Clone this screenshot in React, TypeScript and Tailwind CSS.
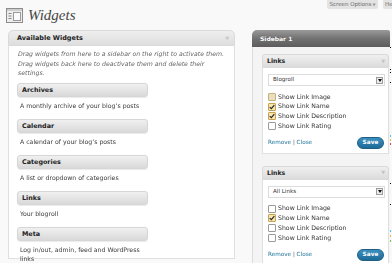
import React from "react";

const sans = "font-['DejaVu_Sans',sans-serif]";

function WidgetItem({ title, desc }: { title: string; desc: React.ReactNode }) {
  return (
    <div className="ml-[8px] w-[131px]">
      <div className="h-[14px] rounded-[3px] border border-[#d6d6d6] bg-gradient-to-b from-[#f0f0f0] to-[#d9d9d9] shadow-[0_1px_1px_rgba(0,0,0,0.08)] flex items-center pl-[4px]">
        <span className="text-[6.4px] font-bold text-[#222] leading-none">{title}</span>
      </div>
      <div className="pt-[3.5px] pl-[3px] mb-[9.5px] text-[6.2px] leading-[9px] text-[#3a3a3a] whitespace-nowrap will-change-transform">{desc}</div>
    </div>
  );
}

function Checkbox({ state }: { state: "on" | "off" | "hover" }) {
  if (state === "on") {
    return (
      <span className="w-[8px] h-[8px] rounded-[1px] border border-[#c9a24a] bg-[#f5e6b8] flex items-center justify-center">
        <svg width="7" height="6" viewBox="0 0 7 6">
          <path d="M0.8 3.2 L2.7 5 L6.2 0.8" fill="none" stroke="#222" strokeWidth="1.3" />
        </svg>
      </span>
    );
  }
  if (state === "hover") {
    return <span className="w-[8px] h-[8px] rounded-[1px] border border-[#c4b37c] bg-[#e9dfbd]" />;
  }
  return <span className="w-[8px] h-[8px] rounded-[1px] border border-[#9a9a9a] bg-white" />;
}

function LinksWidget({ select, checks }: { select: string; checks: ("on" | "off" | "hover")[] }) {
  const labels = ["Show Link Image", "Show Link Name", "Show Link Description", "Show Link Rating"];
  return (
    <div className="mb-[12px]">
      <div className="h-[14px] rounded-t-[3px] border border-[#d9d9d9] bg-gradient-to-b from-[#efefef] to-[#dcdcdc] flex items-center justify-between pl-[4px] pr-[3px]">
        <span className="text-[6.2px] font-bold text-[#222] leading-none">Links</span>
        <span className="text-[5px] text-[#c4c4c4] leading-none">▼</span>
      </div>
      <div className="bg-white border-x border-b border-[#dfdfdf] pl-[5px] pr-[3px] pt-[6px] pb-[4px]">
        <div className="h-[12px] border border-[#dcdcdc] bg-white flex items-center justify-between pl-[4px] pr-[1px]">
          <span className="text-[5.6px] text-[#333] leading-none">{select}</span>
          <span className="w-[7px] h-[7px] border border-[#9c9c9c] bg-[#ececec] flex items-center justify-center">
            <svg width="4" height="3" viewBox="0 0 4 3">
              <path d="M0 0 L4 0 L2 3 Z" fill="#111" />
            </svg>
          </span>
        </div>
        <div className="mt-[6px] flex flex-col">
          {labels.map((l, i) => (
            <div key={l} className="h-[9.7px] flex items-center gap-[1.5px]">
              <Checkbox state={checks[i]} />
              <span className="text-[6.2px] text-[#333] leading-none will-change-transform">{l}</span>
            </div>
          ))}
        </div>
        <div className="mt-[6px] h-[12px] flex items-center justify-between pr-[1px]">
          <span className="text-[5.7px] leading-none text-[#21759b] will-change-transform">
            Remove <span className="text-[#555]">|</span> Close
          </span>
          <span className="w-[27px] h-[12px] rounded-full bg-gradient-to-b from-[#3a90c0] to-[#1d6a96] border border-[#1d5f85] flex items-center justify-center text-[5.8px] font-bold text-white leading-none">
            Save
          </span>
        </div>
      </div>
    </div>
  );
}

export default function App() {
  return (
    <div className={`w-[392px] h-[263px] overflow-hidden bg-[#f9f9f9] flex flex-col ${sans}`}>
      <div className="h-[30px] flex items-start justify-between shrink-0">
        <div className="flex items-center pl-[6px] pt-[8px] gap-[5px]">
          <svg width="17" height="15" viewBox="0 0 17 15">
            <rect x="0.5" y="0.5" width="16" height="14" fill="#ededed" stroke="#8c8c8c" />
            <rect x="1" y="1" width="15" height="2" fill="#cdcdcd" />
            <rect x="2.5" y="5" width="3" height="1" fill="#8a8a8a" />
            <rect x="2.5" y="7.5" width="3" height="1" fill="#8a8a8a" />
            <rect x="2.5" y="10" width="3" height="1" fill="#8a8a8a" />
            <rect x="7.5" y="4.5" width="7" height="8" fill="#fafafa" stroke="#9a9a9a" />
          </svg>
          <span className="font-['Liberation_Serif',serif] italic text-[15px] leading-none text-[#464646]">Widgets</span>
        </div>
        <div className="flex items-start gap-[5px]">
          <div className="w-[51px] h-[9px] rounded-b-[2px] bg-[#e3e3e3] flex items-center justify-center gap-[1px] text-[5.5px] text-[#6a6a6a] leading-none">
            Screen Options <span className="text-[4px] text-[#999]">▼</span>
          </div>
          <div className="w-[9px] h-[9px] rounded-bl-[2px] bg-[#e3e3e3] flex items-center pl-[2px] text-[5.5px] text-[#6a6a6a] leading-none overflow-hidden">
            He
          </div>
        </div>
      </div>

      <div className="flex pl-[8px] gap-[17px]">
        <div className="w-[227px] shrink-0 flex flex-col">
          <div className="h-[16px] rounded-t-[5px] border border-[#dadada] bg-gradient-to-b from-[#eeeeee] to-[#dedede] flex items-center justify-between pl-[8px] pr-[5px]">
            <span className="text-[6.5px] font-bold text-[#222] leading-none">Available Widgets</span>
            <span className="text-[5px] text-[#c8c8c8] leading-none">▼</span>
          </div>
          <div className="bg-white border-x border-b border-[#dfdfdf] pt-[3px] h-[213px]">
            <div className="pl-[9px] text-[6.2px] italic leading-[9.5px] text-[#666] whitespace-nowrap will-change-transform">
              Drag widgets from here to a sidebar on the right to activate them.
              <br />
              Drag widgets back here to deactivate them and delete their
              <br />
              settings.
            </div>
            <div className="mt-[5.25px] flex flex-col">
              <WidgetItem title="Archives" desc="A monthly archive of your blog’s posts" />
              <WidgetItem title="Calendar" desc="A calendar of your blog’s posts" />
              <WidgetItem title="Categories" desc="A list or dropdown of categories" />
              <WidgetItem title="Links" desc="Your blogroll" />
              <WidgetItem
                title="Meta"
                desc={
                  <>
                    Log in/out, admin, feed and WordPress
                    <br />
                    links
                  </>
                }
              />
            </div>
          </div>
        </div>

        <div className="w-[138px] shrink-0 flex flex-col">
          <div className="h-[17px] rounded-tl-[5px] rounded-tr-[2px] bg-gradient-to-b from-[#9a9a9a] via-[#727272] to-[#5c5c5c] flex items-center pl-[8px]">
            <span className="text-[6px] font-bold text-white leading-none [text-shadow:0_-1px_0_rgba(0,0,0,0.3)]">Sidebar 1</span>
          </div>
          <div className="bg-[#f4f4f4] border-l border-[#dcdcdc] pt-[7px] pl-[9px] pr-[1px] h-[220px]">
            <LinksWidget select="Blogroll" checks={["hover", "on", "on", "off"]} />
            <LinksWidget select="All Links" checks={["off", "on", "off", "off"]} />
          </div>
        </div>

        <div className="w-[2px] flex flex-col -ml-[17px] pl-0">
          <div className="mt-[17px] w-[1px] h-[1px] bg-black" />
          <div className="mt-[21px] w-[1px] h-[1px] bg-black" />
          <div className="mt-[2px] w-[1px] h-[1px] bg-black" />
          <div className="mt-[9px] w-[1px] h-[1px] bg-black" />
          <div className="mt-[52px] w-[1px] h-[2px] bg-[#4fc3e8]" />
          <div className="mt-[2px] w-[1px] h-[2px] bg-[#e8c04f]" />
          <div className="mt-[2px] w-[1px] h-[2px] bg-[#d84a4a]" />
          <div className="mt-[38px] w-[1px] h-[1px] bg-black" />
          <div className="mt-[20px] w-[1px] h-[1px] bg-black" />
          <div className="mt-[25px] w-[1px] h-[2px] bg-[#4fc3e8]" />
          <div className="mt-[3px] w-[1px] h-[2px] bg-[#e8c04f]" />
          <div className="mt-[3px] w-[1px] h-[2px] bg-[#7ac04f]" />
        </div>
      </div>
    </div>
  );
}
